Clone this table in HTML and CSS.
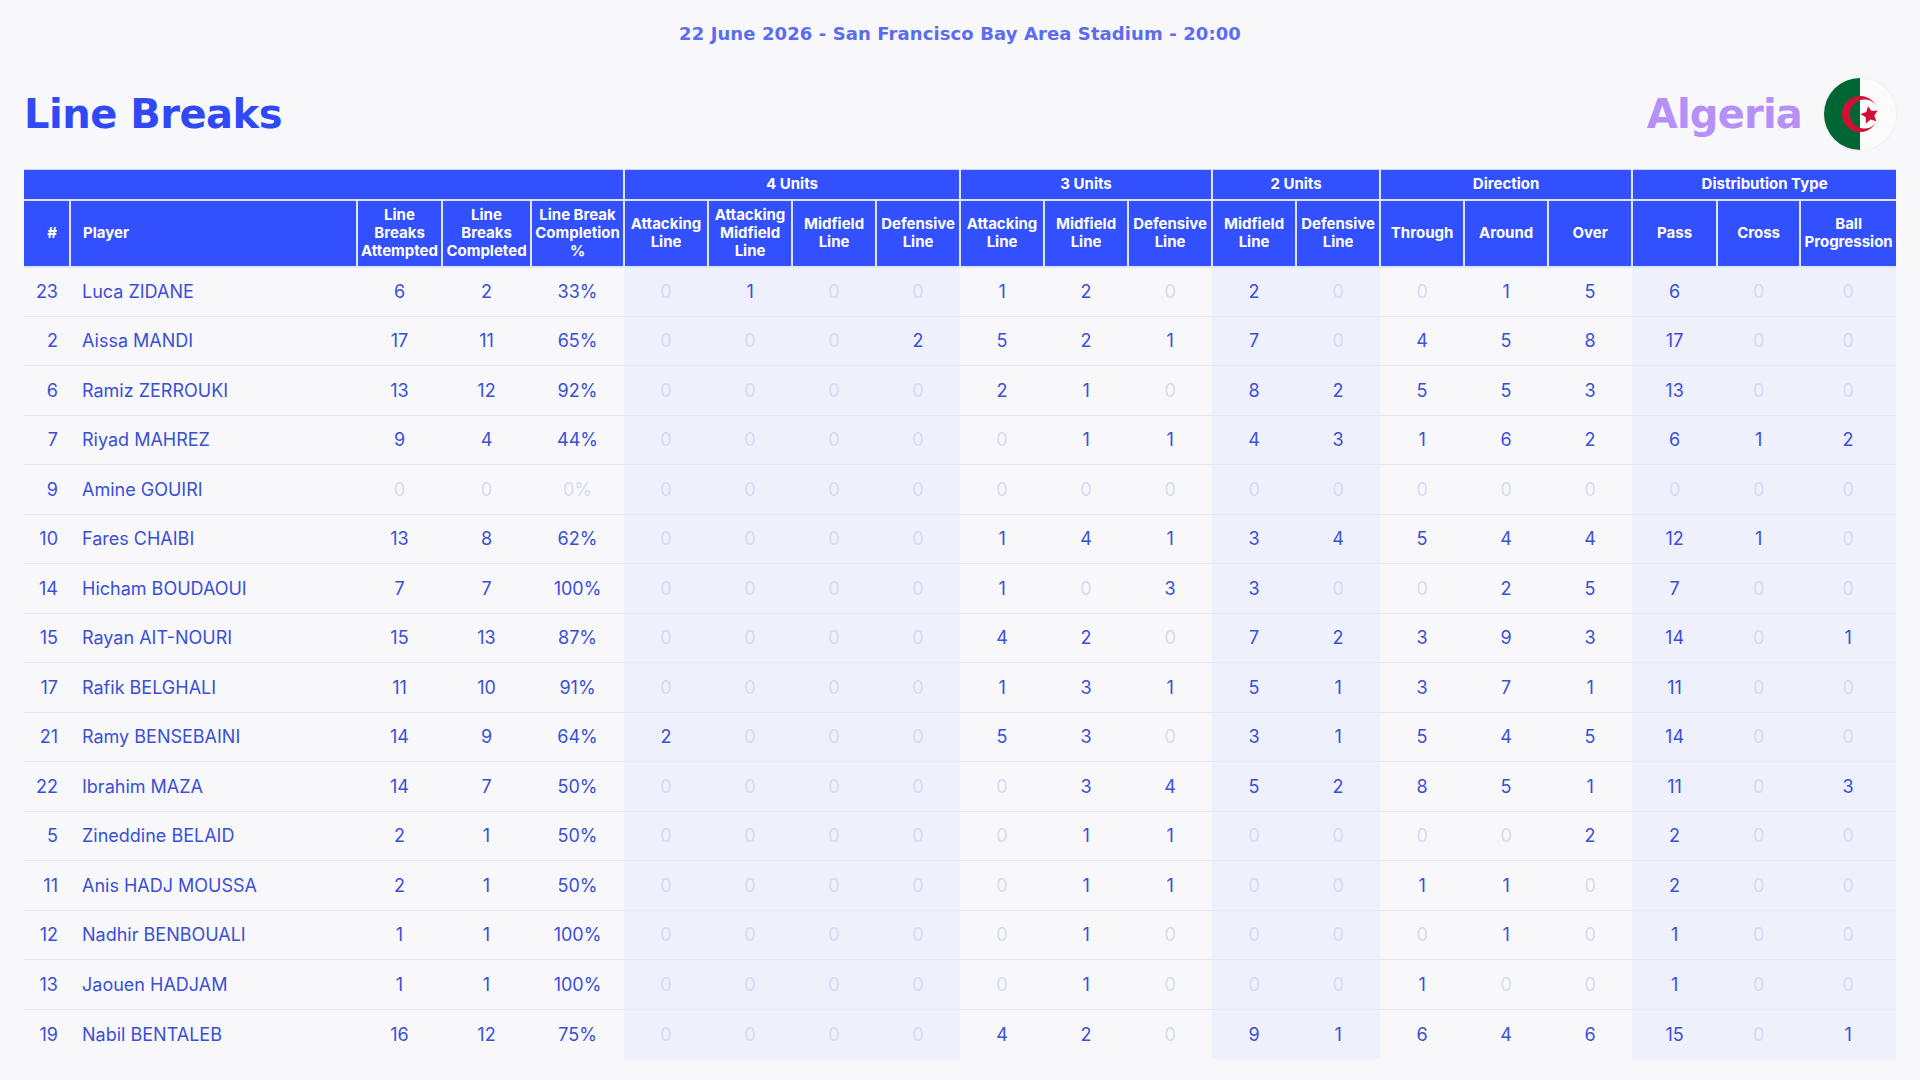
FILE: index.html
```html
<!DOCTYPE html>
<html lang="en">
<head>
<meta charset="utf-8">
<title>Line Breaks - Algeria</title>
<link rel="stylesheet" href="styles.css">
</head>
<body>
<div class="page">
  <div class="date">22 June 2026 - San Francisco Bay Area Stadium - 20:00</div>
  <div class="head">
    <h1 class="title">Line Breaks</h1>
    <div class="team">
      <span class="team-name">Algeria</span>
      <span class="flag">
        <svg viewBox="0 0 72 72" width="72" height="72">
          <defs>
            <clipPath id="c"><circle cx="36" cy="36" r="36"/></clipPath>
            <mask id="m">
              <rect x="0" y="0" width="72" height="72" fill="#fff"/>
              <circle cx="40.5" cy="36" r="14.6" fill="#000"/>
            </mask>
          </defs>
          <g clip-path="url(#c)">
            <rect x="0" y="0" width="72" height="72" fill="#fbfbfb"/>
            <rect x="0" y="0" width="36" height="72" fill="#006633"/>
            <circle cx="36" cy="36" r="18" fill="#d21034" mask="url(#m)"/>
            <polygon fill="#d21034" points="36.5,36 42.3,34 43.9,28.2 47.6,32.9 53.7,32.6 50.3,37.6 52.4,43.3 46.6,41.6 41.9,45.4 41.7,39.3"/>
          </g>
        </svg>
      </span>
    </div>
  </div>
  <table class="stats">
    <colgroup>
      <col class="c-num"><col class="c-player"><col class="c-lba"><col class="c-lbc"><col class="c-pct">
      <col class="c-u t"><col class="c-u t"><col class="c-u t"><col class="c-u t">
      <col class="c-u"><col class="c-u"><col class="c-u">
      <col class="c-u t"><col class="c-u t">
      <col class="c-u"><col class="c-u"><col class="c-u">
      <col class="c-pass t"><col class="c-cross t"><col class="c-ball t">
    </colgroup>
    <thead>
      <tr class="group">
        <th colspan="5"></th>
        <th colspan="4">4 Units</th>
        <th colspan="3">3 Units</th>
        <th colspan="2">2 Units</th>
        <th colspan="3">Direction</th>
        <th colspan="3">Distribution Type</th>
      </tr>
      <tr class="sub">
        <th class="r">#</th>
        <th class="l">Player</th>
        <th>Line Breaks Attempted</th>
        <th>Line Breaks Completed</th>
        <th>Line Break Completion %</th>
        <th>Attacking Line</th>
        <th>Attacking Midfield Line</th>
        <th>Midfield Line</th>
        <th>Defensive Line</th>
        <th>Attacking Line</th>
        <th>Midfield Line</th>
        <th>Defensive Line</th>
        <th>Midfield Line</th>
        <th>Defensive Line</th>
        <th>Through</th>
        <th>Around</th>
        <th>Over</th>
        <th>Pass</th>
        <th>Cross</th>
        <th>Ball Progression</th>
      </tr>
    </thead>
    <tbody>
      <tr><td class="r">23</td><td class="l">Luca ZIDANE</td><td>6</td><td>2</td><td>33%</td><td class="z">0</td><td>1</td><td class="z">0</td><td class="z">0</td><td>1</td><td>2</td><td class="z">0</td><td>2</td><td class="z">0</td><td class="z">0</td><td>1</td><td>5</td><td>6</td><td class="z">0</td><td class="z">0</td></tr>
      <tr><td class="r">2</td><td class="l">Aissa MANDI</td><td>17</td><td>11</td><td>65%</td><td class="z">0</td><td class="z">0</td><td class="z">0</td><td>2</td><td>5</td><td>2</td><td>1</td><td>7</td><td class="z">0</td><td>4</td><td>5</td><td>8</td><td>17</td><td class="z">0</td><td class="z">0</td></tr>
      <tr><td class="r">6</td><td class="l">Ramiz ZERROUKI</td><td>13</td><td>12</td><td>92%</td><td class="z">0</td><td class="z">0</td><td class="z">0</td><td class="z">0</td><td>2</td><td>1</td><td class="z">0</td><td>8</td><td>2</td><td>5</td><td>5</td><td>3</td><td>13</td><td class="z">0</td><td class="z">0</td></tr>
      <tr><td class="r">7</td><td class="l">Riyad MAHREZ</td><td>9</td><td>4</td><td>44%</td><td class="z">0</td><td class="z">0</td><td class="z">0</td><td class="z">0</td><td class="z">0</td><td>1</td><td>1</td><td>4</td><td>3</td><td>1</td><td>6</td><td>2</td><td>6</td><td>1</td><td>2</td></tr>
      <tr><td class="r">9</td><td class="l">Amine GOUIRI</td><td class="z">0</td><td class="z">0</td><td class="z">0%</td><td class="z">0</td><td class="z">0</td><td class="z">0</td><td class="z">0</td><td class="z">0</td><td class="z">0</td><td class="z">0</td><td class="z">0</td><td class="z">0</td><td class="z">0</td><td class="z">0</td><td class="z">0</td><td class="z">0</td><td class="z">0</td><td class="z">0</td></tr>
      <tr><td class="r">10</td><td class="l">Fares CHAIBI</td><td>13</td><td>8</td><td>62%</td><td class="z">0</td><td class="z">0</td><td class="z">0</td><td class="z">0</td><td>1</td><td>4</td><td>1</td><td>3</td><td>4</td><td>5</td><td>4</td><td>4</td><td>12</td><td>1</td><td class="z">0</td></tr>
      <tr><td class="r">14</td><td class="l">Hicham BOUDAOUI</td><td>7</td><td>7</td><td>100%</td><td class="z">0</td><td class="z">0</td><td class="z">0</td><td class="z">0</td><td>1</td><td class="z">0</td><td>3</td><td>3</td><td class="z">0</td><td class="z">0</td><td>2</td><td>5</td><td>7</td><td class="z">0</td><td class="z">0</td></tr>
      <tr><td class="r">15</td><td class="l">Rayan AIT-NOURI</td><td>15</td><td>13</td><td>87%</td><td class="z">0</td><td class="z">0</td><td class="z">0</td><td class="z">0</td><td>4</td><td>2</td><td class="z">0</td><td>7</td><td>2</td><td>3</td><td>9</td><td>3</td><td>14</td><td class="z">0</td><td>1</td></tr>
      <tr><td class="r">17</td><td class="l">Rafik BELGHALI</td><td>11</td><td>10</td><td>91%</td><td class="z">0</td><td class="z">0</td><td class="z">0</td><td class="z">0</td><td>1</td><td>3</td><td>1</td><td>5</td><td>1</td><td>3</td><td>7</td><td>1</td><td>11</td><td class="z">0</td><td class="z">0</td></tr>
      <tr><td class="r">21</td><td class="l">Ramy BENSEBAINI</td><td>14</td><td>9</td><td>64%</td><td>2</td><td class="z">0</td><td class="z">0</td><td class="z">0</td><td>5</td><td>3</td><td class="z">0</td><td>3</td><td>1</td><td>5</td><td>4</td><td>5</td><td>14</td><td class="z">0</td><td class="z">0</td></tr>
      <tr><td class="r">22</td><td class="l">Ibrahim MAZA</td><td>14</td><td>7</td><td>50%</td><td class="z">0</td><td class="z">0</td><td class="z">0</td><td class="z">0</td><td class="z">0</td><td>3</td><td>4</td><td>5</td><td>2</td><td>8</td><td>5</td><td>1</td><td>11</td><td class="z">0</td><td>3</td></tr>
      <tr><td class="r">5</td><td class="l">Zineddine BELAID</td><td>2</td><td>1</td><td>50%</td><td class="z">0</td><td class="z">0</td><td class="z">0</td><td class="z">0</td><td class="z">0</td><td>1</td><td>1</td><td class="z">0</td><td class="z">0</td><td class="z">0</td><td class="z">0</td><td>2</td><td>2</td><td class="z">0</td><td class="z">0</td></tr>
      <tr><td class="r">11</td><td class="l">Anis HADJ MOUSSA</td><td>2</td><td>1</td><td>50%</td><td class="z">0</td><td class="z">0</td><td class="z">0</td><td class="z">0</td><td class="z">0</td><td>1</td><td>1</td><td class="z">0</td><td class="z">0</td><td>1</td><td>1</td><td class="z">0</td><td>2</td><td class="z">0</td><td class="z">0</td></tr>
      <tr><td class="r">12</td><td class="l">Nadhir BENBOUALI</td><td>1</td><td>1</td><td>100%</td><td class="z">0</td><td class="z">0</td><td class="z">0</td><td class="z">0</td><td class="z">0</td><td>1</td><td class="z">0</td><td class="z">0</td><td class="z">0</td><td class="z">0</td><td>1</td><td class="z">0</td><td>1</td><td class="z">0</td><td class="z">0</td></tr>
      <tr><td class="r">13</td><td class="l">Jaouen HADJAM</td><td>1</td><td>1</td><td>100%</td><td class="z">0</td><td class="z">0</td><td class="z">0</td><td class="z">0</td><td class="z">0</td><td>1</td><td class="z">0</td><td class="z">0</td><td class="z">0</td><td>1</td><td class="z">0</td><td class="z">0</td><td>1</td><td class="z">0</td><td class="z">0</td></tr>
      <tr><td class="r">19</td><td class="l">Nabil BENTALEB</td><td>16</td><td>12</td><td>75%</td><td class="z">0</td><td class="z">0</td><td class="z">0</td><td class="z">0</td><td>4</td><td>2</td><td class="z">0</td><td>9</td><td>1</td><td>6</td><td>4</td><td>6</td><td>15</td><td class="z">0</td><td>1</td></tr>
    </tbody>
  </table>
</div>
</body>
</html>
```

FILE: styles.css
```css
* { box-sizing: border-box; }

html, body {
  margin: 0;
  padding: 0;
  background: #f8f8fa;
}

body {
  font-family: "Inter", "Noto Sans", sans-serif;
  color: #3a4fd9;
}

.page {
  width: 1920px;
  height: 1080px;
  padding: 0 24px;
}

.date {
  height: 68px;
  line-height: 68px;
  text-align: center;
  font-family: "DejaVu Sans", sans-serif;
  font-weight: 700;
  font-size: 18px;
  letter-spacing: 0.1px;
  color: #5c6cf0;
}

.head {
  height: 92px;
  display: flex;
  align-items: center;
  justify-content: space-between;
  margin-bottom: 9px;
}

.title {
  margin: 0;
  font-family: "DejaVu Sans", sans-serif;
  font-weight: 700;
  font-size: 40px;
  letter-spacing: -0.5px;
  color: #2f4af5;
  line-height: 1;
}

.team {
  display: flex;
  align-items: center;
  gap: 22px;
}

.team-name {
  font-family: "DejaVu Sans", sans-serif;
  font-weight: 700;
  font-size: 40px;
  letter-spacing: -0.8px;
  color: #b690f7;
  line-height: 1;
}

.flag {
  width: 72px;
  height: 72px;
  border-radius: 50%;
  box-shadow: 0 0 3px rgba(0, 0, 0, 0.08);
  display: block;
}

.flag svg { display: block; }

.stats {
  width: 1872px;
  table-layout: fixed;
  border-collapse: collapse;
}

.c-num { width: 46px; }
.c-player { width: 287px; }
.c-lba { width: 85px; }
.c-lbc { width: 89px; }
.c-pct { width: 93px; }
.c-u { width: 84px; }
.c-pass { width: 85px; }
.c-cross { width: 83px; }
.c-ball { width: 96px; }

col.t { background: #eef0fb; }

.stats th {
  background: #3350fe;
  color: #ffffff;
  font-weight: 700;
  font-size: 15px;
  line-height: 18px;
  text-align: center;
  padding: 0 3px;
  border: 2px solid #dfe4ff;
}

.stats thead tr.group th {
  height: 30px;
  border-top: 1px solid #c8d0ff;
}

.stats thead tr.sub th { height: 67px; }

.stats th:first-child { border-left: none; }
.stats th:last-child { border-right: none; }

.stats th.r { text-align: right; padding-right: 12px; }
.stats th.l { text-align: left; padding-left: 12px; }

.stats td {
  height: 49.5px;
  font-size: 18px;
  text-align: center;
  color: #3a4fd9;
  border-bottom: 1px solid #e5e8f5;
  padding: 0;
  white-space: nowrap;
}

.stats tbody tr:last-child td { border-bottom: none; }

.stats td.r { text-align: right; padding-right: 12px; }
.stats td.l { text-align: left; padding-left: 12px; }
.stats td.z { color: #d6dbf2; }
```
